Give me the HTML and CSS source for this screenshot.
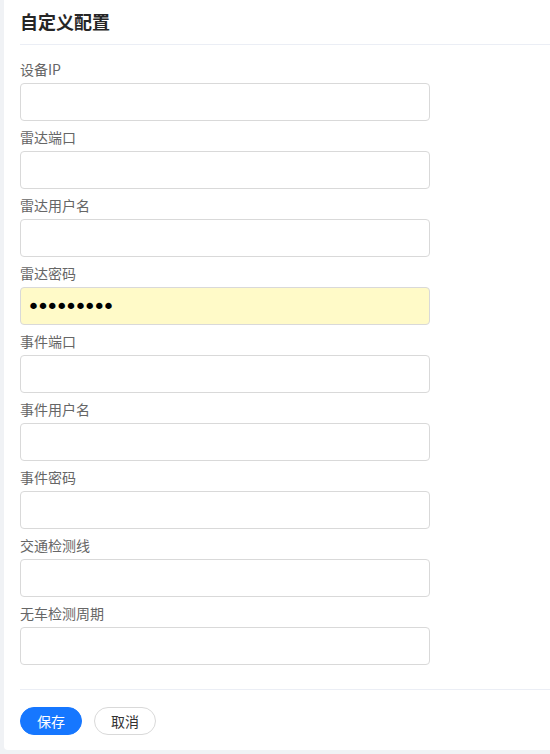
FILE: index.html
```html
<!DOCTYPE html>
<html lang="zh-CN">
<head>
<meta charset="utf-8">
<title>自定义配置</title>
<link rel="stylesheet" href="styles.css">
</head>
<body>
<div class="page">
  <div class="card">
    <div class="header"><h1 class="title">自定义配置</h1></div>
    <form class="form">
      <div class="field"><label class="label">设备IP</label><input class="input" type="text"></div>
      <div class="field"><label class="label">雷达端口</label><input class="input" type="text"></div>
      <div class="field"><label class="label">雷达用户名</label><input class="input" type="text"></div>
      <div class="field"><label class="label">雷达密码</label><input class="input input-autofill" type="password" value="123456789"></div>
      <div class="field"><label class="label">事件端口</label><input class="input" type="text"></div>
      <div class="field"><label class="label">事件用户名</label><input class="input" type="text"></div>
      <div class="field"><label class="label">事件密码</label><input class="input" type="text"></div>
      <div class="field"><label class="label">交通检测线</label><input class="input" type="text"></div>
      <div class="field"><label class="label">无车检测周期</label><input class="input" type="text"></div>
    </form>
    <div class="footer">
      <button class="btn btn-primary" type="button">保存</button>
      <button class="btn btn-default" type="button">取消</button>
    </div>
  </div>
</div>
</body>
</html>
```
FILE: styles.css
```css
* { box-sizing: border-box; }
html, body { margin: 0; padding: 0; }
body {
  background: #f0f2f5;
  font-family: "Noto Sans CJK SC", "Noto Sans", sans-serif;
  color: #333;
}
.page {
  padding: 0 0 3px 4px;
}
.card {
  background: #fff;
  border-radius: 0 0 0 4px;
  padding: 0 0 15px 16px;
}
.header {
  height: 45px;
  border-bottom: 1px solid #ebeef5;
  display: flex;
  align-items: center;
}
.title {
  margin: 0;
  font-size: 18px;
  font-weight: 700;
  color: #262626;
  line-height: 24px;
  padding-bottom: 2px;
}
.form {
  padding: 13px 0 19px;
}
.field {
  display: flex;
  flex-direction: column;
  align-items: flex-start;
  margin-bottom: 5px;
}
.label {
  font-size: 14px;
  line-height: 22px;
  color: #666;
  margin-bottom: 3px;
}
.input {
  width: 410px;
  height: 38px;
  border: 1px solid #d9d9d9;
  border-radius: 4px;
  background: #fff;
  padding: 0 10px;
  font-size: 14px;
  font-family: inherit;
  outline: none;
}
.input-autofill {
  background: #fffac8;
  font-family: "DejaVu Sans", sans-serif;
  font-size: 22px;
  letter-spacing: -3.6px;
  padding: 0 6px;
  color: #000;
}
.footer {
  border-top: 1px solid #ebeef5;
  padding-top: 17px;
  display: flex;
  gap: 12px;
}
.btn {
  height: 28px;
  width: 62px;
  border-radius: 14px;
  font-size: 14px;
  font-family: inherit;
  padding: 0;
  cursor: pointer;
}
.btn-primary {
  background: #1677ff;
  border: 1px solid #1677ff;
  color: #fff;
}
.btn-default {
  background: #fff;
  border: 1px solid #d9d9d9;
  color: #333;
}
```
